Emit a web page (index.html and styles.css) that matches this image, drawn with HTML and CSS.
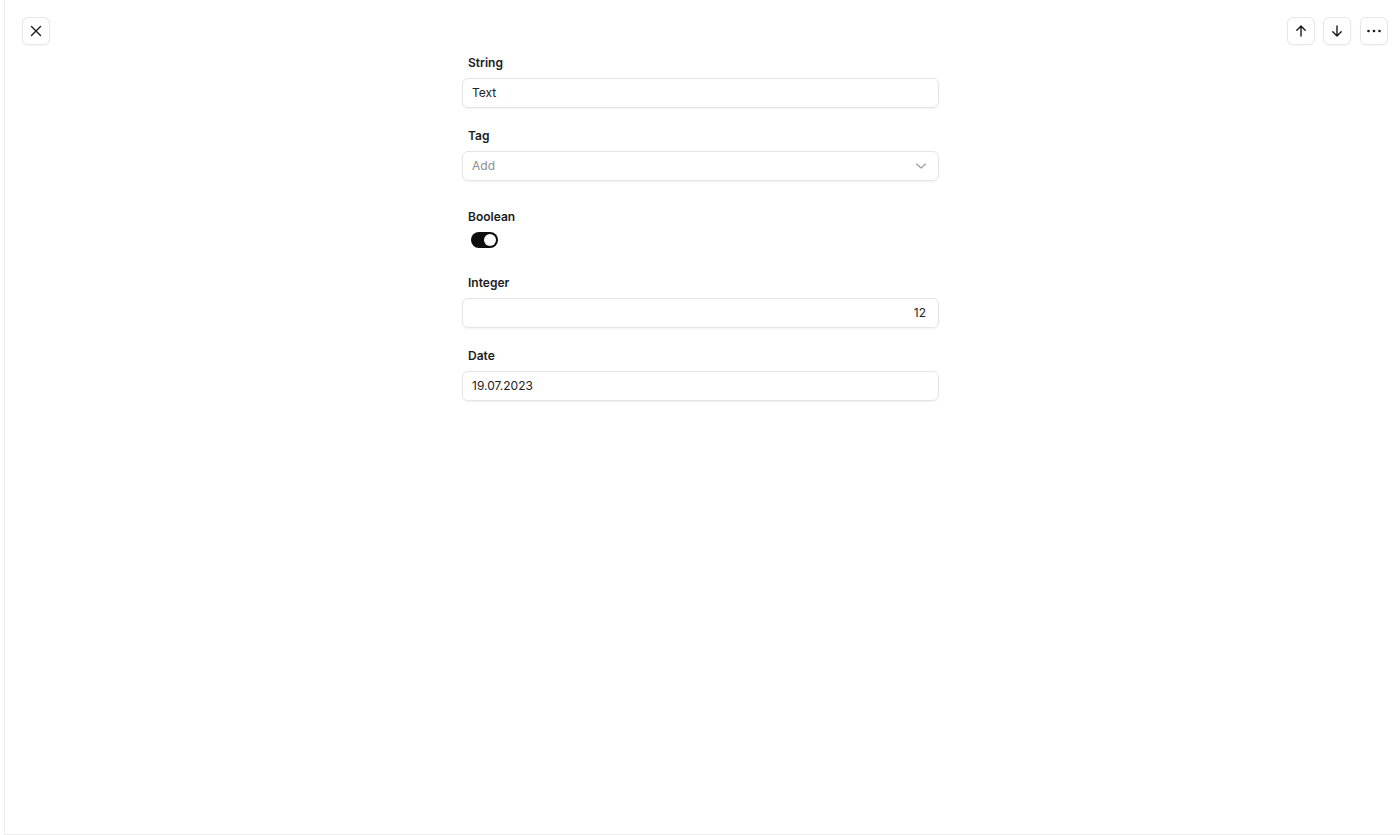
FILE: index.html
```html
<!DOCTYPE html>
<html>
<head>
<meta charset="utf-8">
<link rel="stylesheet" href="styles.css">
</head>
<body>
<div class="panel">
  <div class="header">
    <button class="icon-btn" aria-label="Close">
      <svg width="14" height="14" viewBox="0 0 14 14"><path d="M2.5 2.5l9 9M11.5 2.5l-9 9" stroke="#1a1a1a" stroke-width="1.4" stroke-linecap="round" fill="none"/></svg>
    </button>
    <div class="header-actions">
      <button class="icon-btn" aria-label="Previous">
        <svg width="14" height="14" viewBox="0 0 14 14"><path d="M7 12V2M2.8 6.2L7 2l4.2 4.2" stroke="#1a1a1a" stroke-width="1.4" stroke-linecap="round" stroke-linejoin="round" fill="none"/></svg>
      </button>
      <button class="icon-btn" aria-label="Next">
        <svg width="14" height="14" viewBox="0 0 14 14"><path d="M7 2v10M2.8 7.8L7 12l4.2-4.2" stroke="#1a1a1a" stroke-width="1.4" stroke-linecap="round" stroke-linejoin="round" fill="none"/></svg>
      </button>
      <button class="icon-btn" aria-label="More">
        <svg width="16" height="14" viewBox="0 0 16 14"><circle cx="2.5" cy="7" r="1.3" fill="#1a1a1a"/><circle cx="8" cy="7" r="1.3" fill="#1a1a1a"/><circle cx="13.5" cy="7" r="1.3" fill="#1a1a1a"/></svg>
      </button>
    </div>
  </div>
  <div class="form-wrap">
    <div class="form">
      <div class="field">
        <div class="label">String</div>
        <div class="input">Text</div>
      </div>
      <div class="field">
        <div class="label">Tag</div>
        <div class="input select">
          <span class="placeholder">Add</span>
          <svg width="12" height="8" viewBox="0 0 12 8"><path d="M1.5 2l4.5 4 4.5-4" stroke="#9a9a9a" stroke-width="1.1" stroke-linecap="round" stroke-linejoin="round" fill="none"/></svg>
        </div>
      </div>
      <div class="field field-bool">
        <div class="label">Boolean</div>
        <div class="toggle"><span class="knob"></span></div>
      </div>
      <div class="field">
        <div class="label">Integer</div>
        <div class="input number">12</div>
      </div>
      <div class="field">
        <div class="label">Date</div>
        <div class="input">19.07.2023</div>
      </div>
    </div>
  </div>
</div>
</body>
</html>
```
FILE: styles.css
```css
* { box-sizing: border-box; }
html, body { margin: 0; padding: 0; background: #fff; }
body {
  font-family: Inter, "Noto Sans", "Liberation Sans", sans-serif;
  color: #1c1c1c;
  padding-left: 4px;
}
.panel {
  height: 835px;
  border-left: 1px solid #ececec;
  border-bottom: 1px solid #ececec;
  display: flex;
  flex-direction: column;
}
.header {
  display: flex;
  justify-content: space-between;
  align-items: center;
  padding: 17px 12px 0 17px;
}
.header-actions {
  display: flex;
  gap: 8px;
}
.icon-btn {
  width: 28px;
  height: 28px;
  padding: 0;
  border: 1px solid #e6e6e6;
  border-radius: 6px;
  background: #fff;
  box-shadow: 0 1px 2px rgba(0,0,0,0.04);
  display: flex;
  align-items: center;
  justify-content: center;
}
.header-actions .icon-btn:last-child { margin-left: 1px; }
.form-wrap {
  display: flex;
  justify-content: center;
  padding-right: 4px;
  padding-top: 9px;
}
.form {
  width: 477px;
  display: flex;
  flex-direction: column;
  gap: 19px;
}
.field {
  display: flex;
  flex-direction: column;
  gap: 7px;
}
.label {
  padding-left: 6px;
  padding-top: 1px;
  font-size: 12px;
  line-height: 16px;
  font-weight: 600;
  color: #1c1c1c;
}
.input {
  height: 30px;
  border: 1px solid #e4e4e4;
  border-radius: 6px;
  box-shadow: 0 1px 2px rgba(0,0,0,0.05);
  padding: 0 12px 1px 9px;
  display: flex;
  align-items: center;
  font-size: 12px;
  color: #222;
}
.select { justify-content: space-between; padding-right: 11px; }
.placeholder { color: #8c8c8c; }
.number { justify-content: flex-end; }
.field-bool { padding: 8px 0 7px; }
.toggle {
  margin-left: 9px;
  width: 27px;
  height: 16px;
  border-radius: 8px;
  background: #0d0d0d;
  position: relative;
}
.knob {
  position: absolute;
  right: 2px;
  top: 2px;
  width: 12px;
  height: 12px;
  border-radius: 50%;
  background: #fff;
}
```
